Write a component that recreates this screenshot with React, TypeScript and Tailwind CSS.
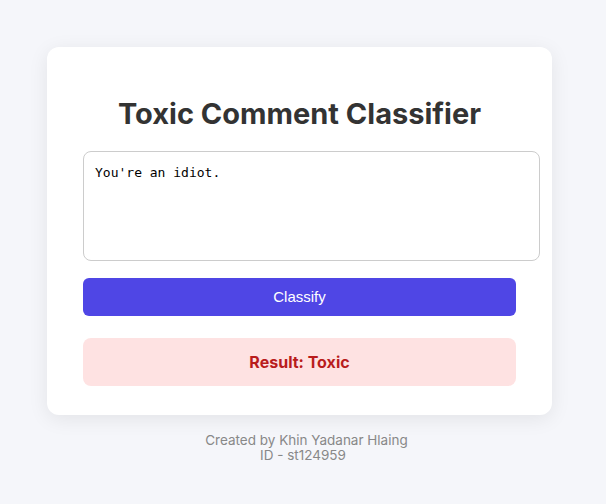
import React, { useState } from 'react';

const App: React.FC = () => {
  const [text, setText] = useState("You're an idiot.");

  return (
    <div className="min-h-screen bg-[#f5f6fa] pt-[47px] font-['Inter',sans-serif]">
      <div className="flex justify-center">
        <div className="mr-[7px] w-[505px] rounded-xl bg-white px-9 pt-[49px] pb-[29px] shadow-[0_4px_20px_rgba(0,0,0,0.08)]">
          <h1 className="text-center text-[29px] font-bold leading-[36px] text-[#333333]">
            Toxic Comment Classifier
          </h1>

          <textarea
            value={text}
            onChange={(e) => setText(e.target.value)}
            className="mt-[19px] block h-[110px] w-[457px] resize-none rounded-lg border border-[#cccccc] py-3 pr-3 pl-[11px] font-['DejaVu_Sans_Mono',monospace] text-[13px] leading-[17px] text-black outline-none"
          />

          <button className="mt-[17px] block h-[38px] w-full rounded-md bg-[#4f46e5] font-['Liberation_Sans',Arial,sans-serif] text-[15px] text-white">
            Classify
          </button>

          <div className="mt-[22px] flex h-[48px] items-center justify-center rounded-lg bg-[#fee2e2] text-[16px] font-bold text-[#b91c1c]">
            Result: Toxic
          </div>
        </div>
      </div>

      <div className="mt-[18px] text-center text-[13.5px] leading-[15px] text-[#888888]">
        <p className="pl-[7px]">Created by Khin Yadanar Hlaing</p>
        <p>ID - st124959</p>
      </div>
    </div>
  );
};

export default App;
